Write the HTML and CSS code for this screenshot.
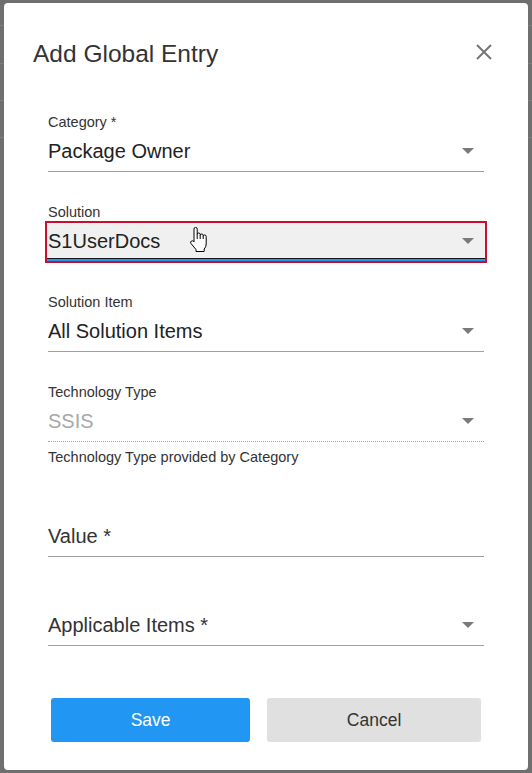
FILE: index.html
```html
<!DOCTYPE html>
<html lang="en">
<head>
<meta charset="utf-8">
<title>Add Global Entry</title>
<link rel="stylesheet" href="styles.css">
</head>
<body>
<div class="overlay">
  <div class="dialog">
    <div class="header">
      <h1 class="title">Add Global Entry</h1>
      <svg class="close" width="16" height="16" viewBox="0 0 16 16" aria-label="Close">
        <path d="M1 1 L15 15 M15 1 L1 15" stroke="#757575" stroke-width="2" fill="none"/>
      </svg>
    </div>
    <form class="form">
      <div class="field">
        <div class="label">Category *</div>
        <div class="row"><span class="value">Package Owner</span><span class="arrow"></span></div>
      </div>
      <div class="field">
        <div class="label">Solution</div>
        <div class="row focused"><span class="value">S1UserDocs</span><span class="arrow"></span>
          <svg class="cursor" width="20" height="26" viewBox="0 0 20 26">
            <path d="M5 2 A1.6 1.6 0 0 1 8.2 2 V7.5 A1.5 1.5 0 0 1 11.2 7.5 V8.5 A1.5 1.5 0 0 1 14.2 8.5 V9.5 A1.5 1.5 0 0 1 17.2 9.5 V17 Q17.2 20 15.2 22 V24.5 H7 V22.5 L2 16.5 Q1 14.9 2.4 14 Q3.7 13.3 4.7 14.5 L5 15 Z" fill="#fff" stroke="#000" stroke-width="1" stroke-linejoin="round"/>
            <path d="M8.2 7.5 V12 M11.2 8.5 V12 M14.2 9.5 V12" stroke="#000" stroke-width="1" fill="none"/>
          </svg>
        </div>
      </div>
      <div class="field">
        <div class="label">Solution Item</div>
        <div class="row"><span class="value">All Solution Items</span><span class="arrow"></span></div>
      </div>
      <div class="field">
        <div class="label">Technology Type</div>
        <div class="row disabled"><span class="value">SSIS</span><span class="arrow"></span></div>
        <div class="helper">Technology Type provided by Category</div>
      </div>
      <div class="field field-wide">
        <div class="label"></div>
        <div class="row"><span class="value placeholder">Value *</span></div>
      </div>
      <div class="field field-tight">
        <div class="label"></div>
        <div class="row"><span class="value placeholder">Applicable Items *</span><span class="arrow"></span></div>
      </div>
      <div class="actions">
        <button type="button" class="btn btn-primary">Save</button>
        <button type="button" class="btn btn-secondary">Cancel</button>
      </div>
    </form>
  </div>
</div>
</body>
</html>
```
FILE: styles.css
```css
html, body {
  margin: 0;
  padding: 0;
}
body {
  width: 532px;
  height: 773px;
  overflow: hidden;
  font-family: "Liberation Sans", Arial, sans-serif;
  background:
    linear-gradient(#7d7d7d, #7d7d7d) 0 25px / 100% 1px no-repeat,
    linear-gradient(#7d7d7d, #7d7d7d) 0 63px / 100% 1px no-repeat,
    linear-gradient(#7d7d7d, #7d7d7d) 0 100px / 100% 1px no-repeat,
    linear-gradient(#7d7d7d, #7d7d7d) 0 137px / 100% 1px no-repeat,
    #6f6f6f;
}
.overlay {
  padding: 3px 4px;
}
.dialog {
  width: 524px;
  height: 767px;
  box-sizing: border-box;
  background: #fff;
  border-radius: 4px;
  padding: 37px 36px 0 29px;
}
.header {
  display: flex;
  align-items: center;
  justify-content: space-between;
}
.title {
  margin: 0;
  font-size: 24.5px;
  line-height: 28px;
  font-weight: normal;
  color: #333;
}
.close {
  margin-bottom: 4px;
  display: block;
}
.form {
  display: flex;
  flex-direction: column;
  margin: 45px 8px 0 15px;
}
.field + .field {
  margin-top: 31px;
}
.field.field-wide {
  margin-top: 32px;
}
.field.field-tight {
  margin-top: 30px;
}
.label {
  height: 18px;
  font-size: 14.5px;
  line-height: 18px;
  color: #333;
}
.row {
  position: relative;
  display: flex;
  align-items: center;
  padding: 7px 0;
  font-size: 20px;
  line-height: 26px;
  color: #222;
  border-bottom: 1px solid #a0a0a0;
}
.value {
  flex: 1;
  white-space: nowrap;
}
.placeholder {
  color: #333;
}
.arrow {
  width: 0;
  height: 0;
  margin-right: 10px;
  border-left: 6px solid transparent;
  border-right: 6px solid transparent;
  border-top: 6px solid #7a7a7a;
}
.row.focused {
  margin: 2px -1px 1px;
  padding: 5px 1px;
  background: #f0f0f0;
  border-bottom: 2px solid #2196f3;
  box-shadow: inset 0 -1px 0 #1a1a1a;
  outline: 2px solid #c8102e;
}
.cursor {
  position: absolute;
  left: 142px;
  top: 4px;
}
.row.disabled {
  color: #a8a8a8;
  border-bottom: 1px dotted #a0a0a0;
}
.helper {
  margin-top: 6px;
  font-size: 14.5px;
  line-height: 18px;
  color: #333;
}
.actions {
  display: flex;
  gap: 17px;
  margin: 52px 3px 0;
}
.btn {
  flex: 1 1 auto;
  height: 44px;
  border: none;
  border-radius: 3px;
  font-family: "Liberation Sans", Arial, sans-serif;
  font-size: 17.5px;
  cursor: pointer;
}
.btn-primary {
  background: #2196f3;
  color: #fff;
}
.btn-secondary {
  background: #e0e0e0;
  color: #333;
}
```
